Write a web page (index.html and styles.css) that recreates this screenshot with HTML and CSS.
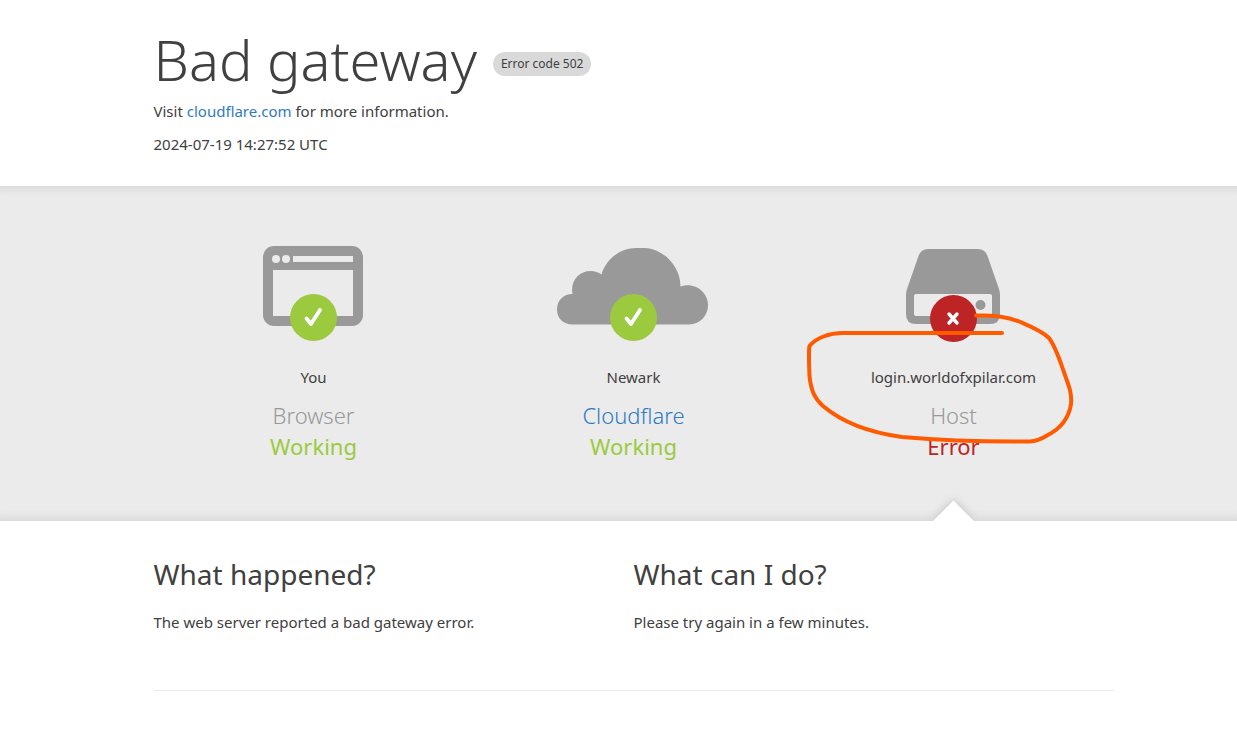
FILE: index.html
```html
<!DOCTYPE html>
<html lang="en">
<head>
<meta charset="utf-8">
<meta name="viewport" content="width=device-width, initial-scale=1">
<title>502: Bad gateway</title>
<link rel="stylesheet" href="styles.css">
</head>
<body>
<header class="wrapper header">
  <h1 class="title"><span>Bad gateway</span><span class="code-label">Error code 502</span></h1>
  <p class="text">Visit <a class="link" href="https://www.cloudflare.com/">cloudflare.com</a> for more information.</p>
  <p class="text">2024-07-19 14:27:52 UTC</p>
</header>

<main>
  <section class="band">
    <div class="wrapper statuses">
      <div class="status">
        <svg class="status-icon" viewBox="234 244 160 100" aria-hidden="true">
          <rect x="263" y="246" width="100" height="80" rx="11" fill="#999"/>
          <circle cx="276" cy="259" r="4" fill="#ebebeb"/>
          <circle cx="286" cy="259" r="4" fill="#ebebeb"/>
          <path fill="#ebebeb" d="M293 256h60v6h-60zM273 270h80v46h-80z"/>
          <circle cx="313.5" cy="317.5" r="23.5" fill="#9bca3e"/>
          <path d="M306.500 318.500L311 324L320 310" fill="none" stroke="#fff" stroke-width="3.800" stroke-linecap="round" stroke-linejoin="round"/>
        </svg>
        <span class="name">You</span>
        <h2 class="kind">Browser</h2>
        <span class="state ok">Working</span>
      </div>
      <div class="status">
        <svg class="status-icon" viewBox="554 244 160 100" aria-hidden="true">
          <path fill="#999" d="M572.500 324.500C563 324.500 557 318 557 309.500C557 300 563.500 294 572.500 294C570 281 579 271 590.500 271C595 271 598.500 272.500 601.500 274.500C606 258.500 621 248 636 248H645C665 249.500 680.500 267 680.500 286.500C694 281.500 708 291.500 708 305C708 316 699.500 324.500 689 324.500Z"/>
          <circle cx="633.5" cy="317.5" r="23.5" fill="#9bca3e"/>
          <path d="M626.500 318.500L631 324L640 310" fill="none" stroke="#fff" stroke-width="3.800" stroke-linecap="round" stroke-linejoin="round"/>
        </svg>
        <span class="name">Newark</span>
        <h2 class="kind"><a class="link" href="https://www.cloudflare.com/">Cloudflare</a></h2>
        <span class="state ok">Working</span>
      </div>
      <div class="status">
        <svg class="status-icon" viewBox="874 244 160 100" aria-hidden="true">
          <path fill="#999" d="M928 249H978Q985 249 987.500 256L999 289Q1000 292 1000 295V314Q1000 324 990 324H916Q906 324 906 314V295Q906 292 907 289L918.500 256Q921 249 928 249Z"/>
          <rect x="914" y="294" width="78" height="22" rx="2" fill="#ebebeb"/>
          <circle cx="980.5" cy="305" r="5" fill="#999"/>
          <circle cx="953.5" cy="318.500" r="23.500" fill="#bd2426"/>
          <path d="M949 314L957 323M957 314L949 323" stroke="#fff" stroke-width="3.400" stroke-linecap="round"/>
        </svg>
        <span class="name">login.worldofxpilar.com</span>
        <h2 class="kind">Host</h2>
        <span class="state bad">Error</span>
        <svg class="arrow" viewBox="1 0 60 30" aria-hidden="true">
          <path class="arrow-shape" d="M10 30L30.500 9.500L51 30Z"/>
        </svg>
        <svg class="marker" viewBox="794 186 320 335" aria-hidden="true">
          <path d="M1002 333H843C829 333 816 338 809.500 346C808.500 351 809 364 809.500 376C811 391 815 399 823 406C843 423 873 433 902 437C937 440 982 442 1030 441.500C1038 441 1042 438.500 1047 435.500C1062 428 1069 417 1071 404C1072 394 1069 386 1066 378C1060 361 1056 347 1049 338C1041 330 1027 325 1018 321C1004 316 991 315 976 315.500"/>
        </svg>
      </div>
    </div>
  </section>

  <div class="wrapper details">
    <section>
      <h2 class="heading">What happened?</h2>
      <p class="text">The web server reported a bad gateway error.</p>
    </section>
    <section>
      <h2 class="heading">What can I do?</h2>
      <p class="text">Please try again in a few minutes.</p>
    </section>
  </div>
</main>
</body>
</html>
```
FILE: styles.css
```css
* { box-sizing: border-box; }

body {
  margin: 0;
  padding-left: 30px;
  background: #fff;
  color: #404040;
  font-family: "Noto Sans", "Open Sans", sans-serif;
  font-size: 15px;
  line-height: 24px;
}

h1, h2, p { margin: 0; font-weight: 400; }

.wrapper {
  max-width: 960px;
  margin: 0 auto;
}

.header {
  padding-top: 23px;
  padding-bottom: 30px;
}

.title {
  display: flex;
  flex-wrap: wrap;
  align-items: center;
  gap: 16px;
  margin-bottom: 4px;
  font-size: 56px;
  font-weight: 300;
  line-height: 72px;
}

.code-label {
  margin-top: 10px;
  padding: 0 8px;
  border-radius: 12px;
  background: #d9d9d9;
  font-size: 12px;
  font-weight: 400;
  line-height: 24px;
}

.text + .text { margin-top: 9px; }

.link { color: #2f7bbf; text-decoration: none; }

.band {
  margin-left: -30px;
  padding-left: 30px;
  background: #ebebeb;
  box-shadow: inset 0 12px 10px -10px #d4d4d4, inset 0 -12px 10px -10px #d4d4d4;
}

.statuses, .details { display: grid; }

.statuses { grid-template-columns: repeat(3, 1fr); }

.status {
  position: relative;
  display: flex;
  flex-direction: column;
  align-items: center;
  padding: 58px 0 59px;
}

.status-icon {
  width: 160px;
  height: 100px;
  margin-bottom: 21px;
}

.name { margin-bottom: 11px; }

.kind, .state {
  font-size: 22px;
  line-height: 31px;
}

.kind { color: #999; font-weight: 300; }
.ok { color: #9bca3e; }
.bad { color: #bd2426; }

.arrow {
  position: absolute;
  bottom: 0;
  left: calc(50% - 30px);
  width: 60px;
  height: 30px;
}

.arrow-shape {
  fill: #fff;
  filter: drop-shadow(0 0 4px #bbb);
}

.marker {
  position: absolute;
  top: 0;
  left: 0;
  width: 320px;
  height: 335px;
  fill: none;
  stroke: #ff5a00;
  stroke-width: 4;
  stroke-linecap: round;
  stroke-linejoin: round;
  pointer-events: none;
}

.details {
  grid-template-columns: repeat(2, 1fr);
  padding: 33px 0 56px;
  border-bottom: 1px solid #ebebeb;
}

.heading {
  margin-bottom: 16px;
  font-size: 28px;
  line-height: 40px;
}

@media (max-width: 720px) {
  .statuses, .details { grid-template-columns: 1fr; }
}
```
